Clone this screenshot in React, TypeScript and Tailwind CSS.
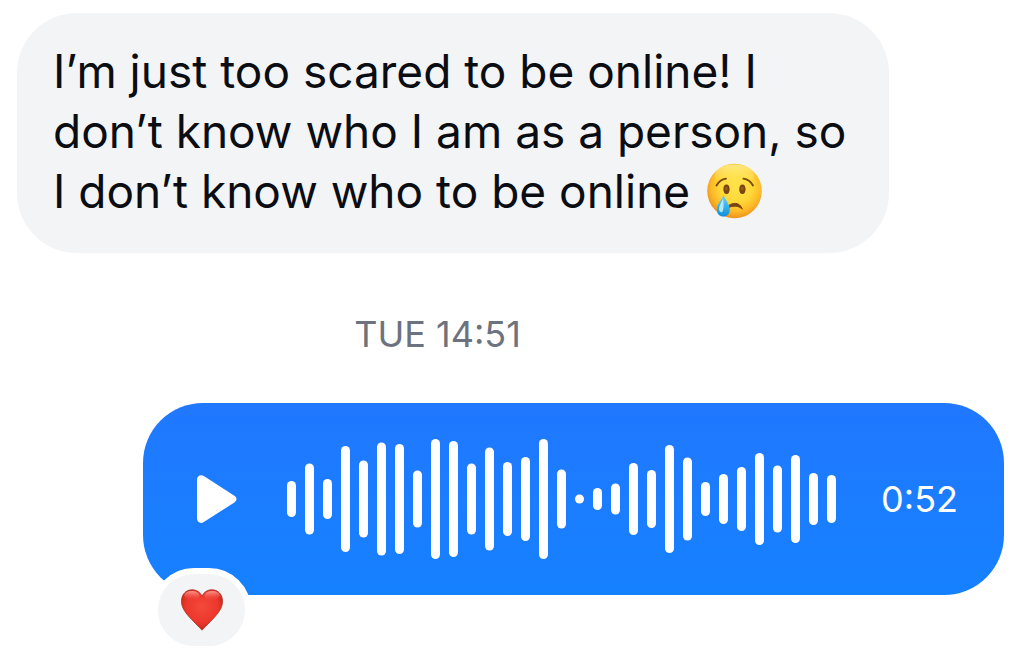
const bars = [
  36, 71, 40, 106, 77, 113, 110, 57, 120, 116, 71, 103, 74, 84, 120, 59,
  9, 22, 31, 72, 58, 108, 83, 34, 50, 64, 92, 67, 88, 52, 48,
];

function CryingFace() {
  return (
    <svg
      role="img"
      aria-label="Crying face"
      viewBox="0 0 56 56"
      className="-mt-3 -mb-1 ml-1 inline-block h-14 w-14 align-middle"
    >
      <defs>
        <radialGradient id="face" cx="0.53" cy="0.42" r="0.6">
          <stop offset="0" stopColor="#ffe34a" />
          <stop offset="0.5" stopColor="#ffd738" />
          <stop offset="0.76" stopColor="#fdb927" />
          <stop offset="1" stopColor="#ea8c1d" />
        </radialGradient>
        <linearGradient id="shine" x1="0" y1="0" x2="0" y2="1">
          <stop offset="0" stopColor="#fff6a0" stopOpacity="0.75" />
          <stop offset="1" stopColor="#ffe75a" stopOpacity="0" />
        </linearGradient>
        <linearGradient id="tear" x1="0" y1="0" x2="0" y2="1">
          <stop offset="0" stopColor="#7ed0ee" />
          <stop offset="0.55" stopColor="#35b2ee" />
          <stop offset="1" stopColor="#148dd8" />
        </linearGradient>
      </defs>
      <circle cx="27.5" cy="28" r="27.3" fill="url(#face)" />
      <ellipse cx="27.5" cy="12" rx="20" ry="10.5" fill="url(#shine)" />
      <g fill="none" stroke="#7a4a0b" strokeWidth="1.9" strokeLinecap="round">
        <path d="M9.5 22.5C11.5 18.8 14.5 16.2 19 15.6" />
        <path d="M36.4 15.6C41 16.2 44 18.8 46 22.5" />
      </g>
      <ellipse cx="19.5" cy="26.2" rx="3.1" ry="4.7" fill="#7a430d" />
      <ellipse cx="35.4" cy="26.2" rx="3.1" ry="4.7" fill="#7a430d" />
      <ellipse cx="19.3" cy="25.4" rx="1.2" ry="2" fill="#9a5f20" />
      <ellipse cx="35.2" cy="25.4" rx="1.2" ry="2" fill="#9a5f20" />
      <path
        d="M21.5 43C23 41.2 25.4 40.4 28.3 40.4C31.5 40.4 34 42.4 35.3 46.2C33 44 30.8 43.2 28.3 43.2C25.6 43.2 23.5 43.6 21.5 44.6Z"
        fill="#7a430d"
        stroke="#7a430d"
        strokeLinejoin="round"
      />
      <path
        d="M16.5 31.6C17.5 36.2 22.8 41 22.8 46.4C22.8 50.9 20.1 53.5 16.4 53.5C12.6 53.5 9.8 50.9 9.8 46.4C9.8 41 15.5 36.2 16.5 31.6Z"
        fill="url(#tear)"
      />
      <path
        d="M16 35.6C15 39 12 42.5 12 46C12 48 13.2 49.4 14.6 49.2C16.8 48.8 17 42 16 35.6Z"
        fill="#d5f2fb"
        fillOpacity="0.8"
      />
    </svg>
  );
}

function Heart() {
  return (
    <svg viewBox="0 0 42 42" aria-hidden="true" className="h-[42px] w-[42px]">
      <defs>
        <radialGradient id="heart" cx="0.5" cy="0.42" r="0.6">
          <stop offset="0" stopColor="#f4493c" />
          <stop offset="0.65" stopColor="#ec372c" />
          <stop offset="1" stopColor="#c4231c" />
        </radialGradient>
        <linearGradient id="gloss" x1="0" y1="0" x2="0" y2="1">
          <stop offset="0" stopColor="#ffa99e" stopOpacity="0.85" />
          <stop offset="1" stopColor="#f8584b" stopOpacity="0" />
        </linearGradient>
      </defs>
      <path
        d="M21 41.2C19.8 39.6 10.6 31 6.6 26C2.4 20.8 0.5 17 0.5 12.2C0.5 5.4 5 0.8 11 0.8C15.8 0.8 19.6 3.4 21 7.6C22.4 3.4 26.2 0.8 31 0.8C37 0.8 41.5 5.4 41.5 12.2C41.5 17 39.6 20.8 35.4 26C31.4 31 22.2 39.6 21 41.2Z"
        fill="url(#heart)"
        stroke="#a8301f"
        strokeWidth="0.8"
      />
      <ellipse cx="10.8" cy="6.6" rx="7.6" ry="4.6" fill="url(#gloss)" />
      <ellipse cx="31.2" cy="6.6" rx="7.6" ry="4.6" fill="url(#gloss)" />
    </svg>
  );
}

function Waveform() {
  return (
    <svg
      role="img"
      aria-label="Voice message waveform"
      viewBox="0 0 549 120"
      className="h-[120px] w-[549px] fill-white"
    >
      {bars.map((height, index) => (
        <rect
          key={index}
          x={index * 18}
          y={60 - height / 2}
          width={9}
          height={height}
          rx={4.5}
        />
      ))}
    </svg>
  );
}

function VoiceMessage() {
  return (
    <div className="relative ml-auto flex h-48 w-fit items-center rounded-[60px] bg-linear-to-b from-[#2078ff] to-[#1581ff] pr-[46px] pl-[54px] text-white">
      <button type="button" aria-label="Play voice message" className="mr-[50px] cursor-pointer">
        <svg viewBox="0 0 40 48" className="h-12 w-10 fill-white">
          <path d="M0 4.5C0 0.8 3.6 -1 6.8 1L37.4 20.8C40.2 22.6 40.2 25.6 37.4 27.4L6.8 47.1C3.6 49.1 0 47.3 0 43.6Z" />
        </svg>
      </button>
      <Waveform />
      <span className="ml-[45px] text-[36px] leading-10">0:52</span>
      <button
        type="button"
        aria-label="Heart reaction"
        className="absolute -bottom-[57px] left-[9px] flex h-[84px] w-[99px] cursor-pointer items-center justify-center rounded-full border-6 border-white bg-[#f3f4f6]"
      >
        <Heart />
      </button>
    </div>
  );
}

export default function App() {
  return (
    <main className="flex min-h-screen flex-col bg-white pt-[13px] pr-6 pl-[17px] font-['Inter',sans-serif]">
      <p className="max-w-[872px] rounded-[60px] bg-[#f3f4f6] px-9 pt-7 pb-8 text-[46px] leading-[60px] text-[#0a0d12]">
        I’m just too scared to be online! I don’t know who I am as a person, so I
        don’t know who to be online <CryingFace />
      </p>
      <time className="mt-[61px] mr-[146px] mb-[49px] text-center text-[36px] leading-10 text-[#6d737e]">
        TUE 14:51
      </time>
      <VoiceMessage />
    </main>
  );
}
